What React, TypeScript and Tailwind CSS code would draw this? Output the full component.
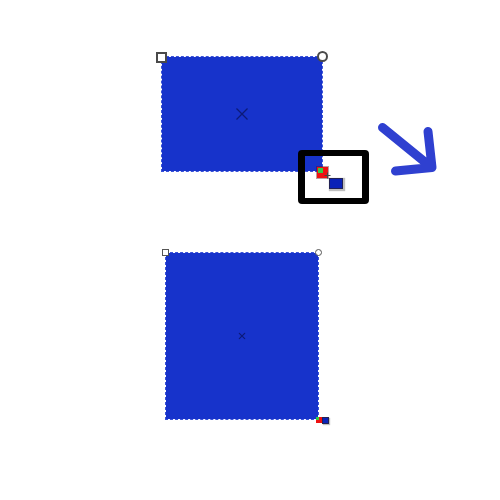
import { ReactNode } from "react";

function CrossMark({ size, weight }: { size: number; weight: number }) {
  return (
    <svg className="absolute left-1/2 top-1/2 -translate-x-1/2 -translate-y-1/2" width={size} height={size} viewBox="0 0 12 12">
      <path d="M0.5 0.5 L11.5 11.5 M11.5 0.5 L0.5 11.5" stroke="#0c1a78" strokeWidth={weight} fill="none" />
    </svg>
  );
}

function Shape({ className, children }: { className: string; children?: ReactNode }) {
  return <div className={`absolute border border-dashed border-[#3a52d8] bg-[#1733cb] bg-clip-padding ${className}`}>{children}</div>;
}

export default function App() {
  return (
    <div className="relative h-[500px] w-[500px] overflow-hidden bg-white">
      {/* top shape */}
      <Shape className="left-[161px] top-[56px] h-[116px] w-[162px]">
        <CrossMark size={12} weight={1.3} />
        <div className="absolute left-[-6px] top-[-5px] h-[11px] w-[11px] border-2 border-[#4a4a4a] bg-white" />
        <div className="absolute right-[-6px] top-[-6px] h-[11px] w-[11px] rounded-full border-2 border-[#4a4a4a] bg-white" />
      </Shape>

      {/* highlight frame */}
      <div className="absolute left-[298px] top-[150px] h-[54px] w-[71px] rounded-[4px] border-x-[7px] border-y-[6px] border-black" />

      {/* cursor inside frame */}
      <div className="absolute left-[317px] top-[167px] h-[11px] w-[11px] bg-[#ee1111] p-px shadow-[0_0_0_1px_rgba(90,16,16,0.4)]">
        <div className="h-[5px] w-[5px] bg-[#33cc44]" />
      </div>
      <svg className="absolute left-[324px] top-[172px]" width="7" height="7" viewBox="0 0 7 7">
        <path d="M3.5 0.5 V6.5 M0.5 3.5 H6.5" stroke="#444444" strokeWidth="1" fill="none" />
      </svg>
      <div className="absolute left-[329px] top-[178px] h-[11px] w-[14px] border border-[#222255] bg-[#0a22b8] shadow-[1px_1px_1px_1px_rgba(0,0,0,0.25)]" />

      {/* arrow */}
      <svg className="absolute left-[370px] top-[115px]" width="75" height="70" viewBox="370 115 75 70">
        <path
          d="M382.5 127.5 L431 167 M428 131.5 L432 167.5 L395.5 171"
          stroke="#2f40d0"
          strokeWidth="9"
          strokeLinecap="round"
          strokeLinejoin="round"
          fill="none"
        />
      </svg>

      {/* bottom shape */}
      <Shape className="left-[165px] top-[252px] h-[168px] w-[154px]">
        <CrossMark size={7} weight={2} />
        <div className="absolute left-[-4px] top-[-4px] h-[7px] w-[7px] border border-[#555555] bg-white" />
        <div className="absolute right-[-4px] top-[-4px] h-[7px] w-[7px] rounded-full border border-[#555555] bg-white" />
      </Shape>

      {/* small cursor */}
      <div className="absolute left-[316px] top-[417px] h-[6px] w-[6px] bg-[#ee1111]">
        <div className="h-[3px] w-[3px] bg-[#33cc44]" />
      </div>
      <div className="absolute left-[322px] top-[417px] h-[7px] w-[7px] border border-[#222255] bg-[#0a22b8] shadow-[1px_1px_1px_0px_rgba(0,0,0,0.25)]" />
    </div>
  );
}
